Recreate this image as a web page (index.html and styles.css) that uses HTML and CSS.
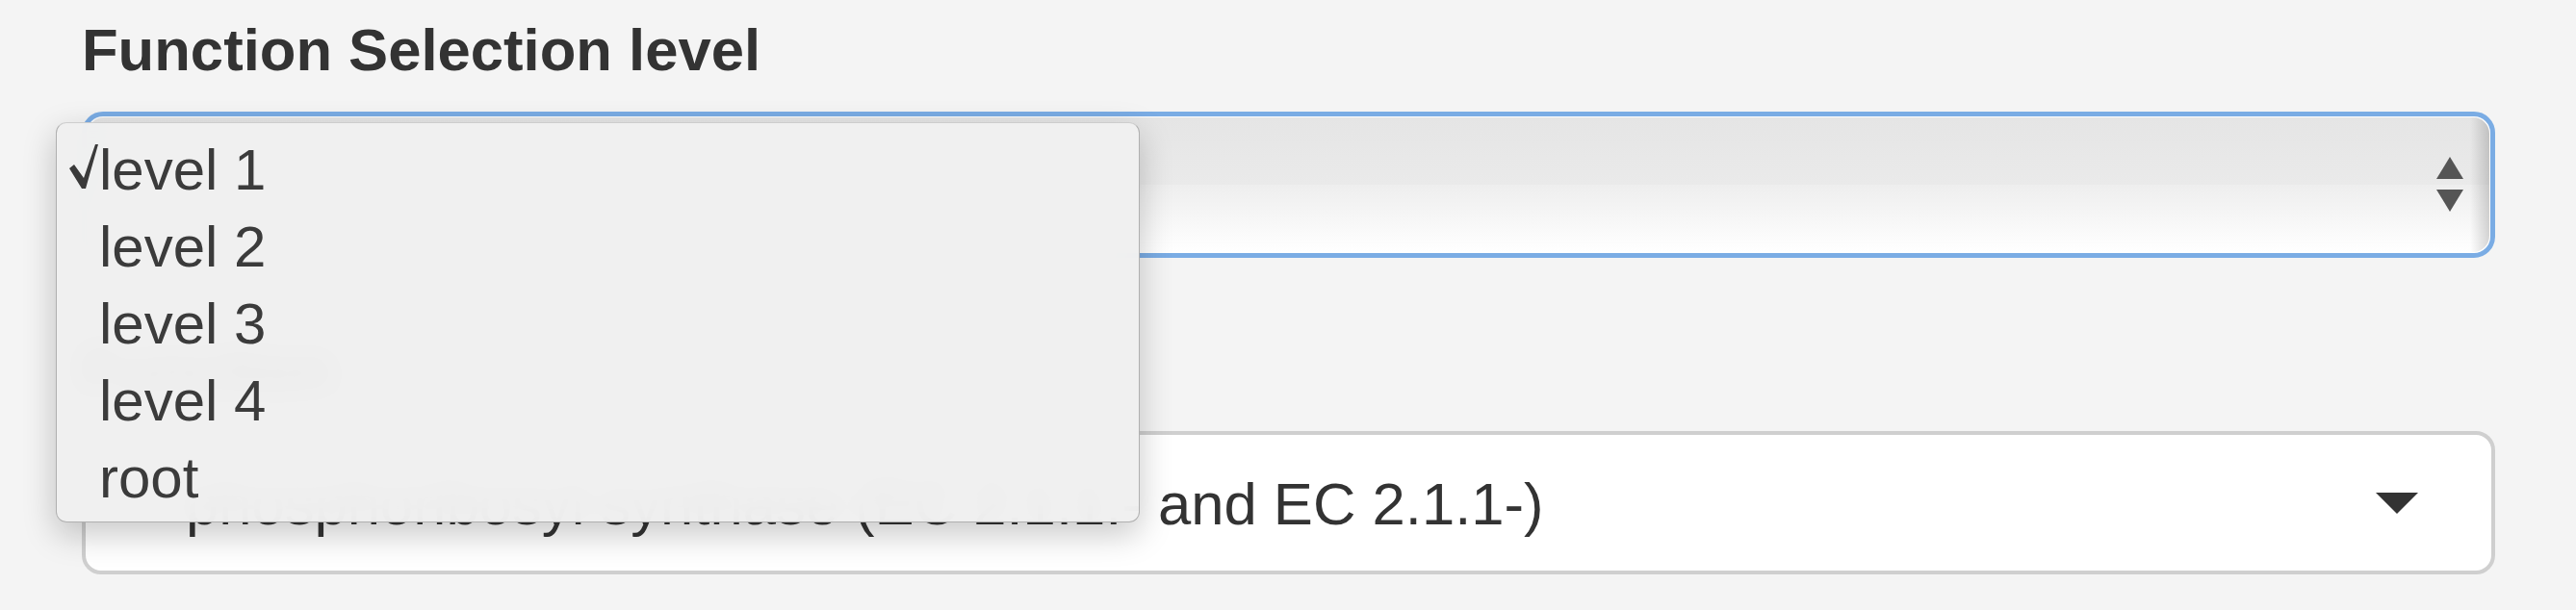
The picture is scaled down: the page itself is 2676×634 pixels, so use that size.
FILE: index.html
```html
<!DOCTYPE html>
<html>
<head>
<meta charset="utf-8">
<link rel="stylesheet" href="styles.css">
</head>
<body>
<div class="well">
  <div class="form-group">
    <label class="label">Function Selection level</label>
    <div class="select-focus">
      <div class="select-inner">
        <svg class="stepper" width="28" height="58" viewBox="0 0 28 58"><polygon points="14,0 28,23 0,23" fill="#555"/><polygon points="0,34 28,34 14,57" fill="#555"/></svg>
        <div class="select-edge"></div>
      </div>
    </div>
  </div>
  <div class="form-group last">
    <label class="label">Function</label>
    <div class="select">
      <span class="select-text">phosphoribosyl synthase (EC 2.1.1.- and EC 2.1.1-)</span>
      <svg class="caret" width="44" height="22" viewBox="0 0 44 22"><polygon points="0,0 44,0 22,22" fill="#333"/></svg>
    </div>
  </div>
</div>
<div class="menu">
  <div class="menu-item"><svg class="check" width="30" height="46" viewBox="0 0 30 46"><path d="M0,25 L5,21 L15,35 L27,0 L30,0 L17,46 L13,46 Z" fill="#3a3a3a"/></svg><span>level 1</span></div>
  <div class="menu-item"><span class="spacer"></span><span>level 2</span></div>
  <div class="menu-item"><span class="spacer"></span><span>level 3</span></div>
  <div class="menu-item"><span class="spacer"></span><span>level 4</span></div>
  <div class="menu-item"><span class="spacer"></span><span>root</span></div>
</div>
</body>
</html>
```
FILE: styles.css
```css
html, body {
  margin: 0;
  padding: 0;
}
html {
  overflow: hidden;
}
body {
  background: #f4f4f4;
  font-family: "Liberation Sans", Arial, sans-serif;
  color: #333;
  width: 2676px;
  height: 634px;
  overflow: hidden;
  position: relative;
}
.well {
  padding: 8px 84px 0 85px;
}
.form-group {
  margin-bottom: 72px;
}
.form-group.last {
  margin-bottom: 0;
}
.label {
  display: block;
  font-weight: 700;
  font-size: 61.6px;
  line-height: 88px;
  margin-bottom: 20px;
  color: #333;
}
.select-focus {
  height: 140px;
  border: 5px solid #7aace4;
  border-radius: 22px;
  padding: 1px;
  background: #fff;
}
.select-inner {
  height: 100%;
  border-radius: 17px;
  background: linear-gradient(#e5e5e5 0%, #eaeaea 50%, #eeeeee 50%, #ffffff 100%);
  display: flex;
  align-items: center;
  justify-content: flex-end;
  overflow: hidden;
}
.stepper {
  display: block;
  margin-right: 7px;
}
.select-edge {
  align-self: stretch;
  width: 20px;
  background: linear-gradient(to right, rgba(0,0,0,0), rgba(0,0,0,0.16));
}
.select {
  height: 141px;
  border: 4.5px solid #cfcfcf;
  border-radius: 20px;
  background: #fff;
  display: flex;
  align-items: center;
  padding: 0 76px 0 104px;
}
.select-text {
  flex: 1;
  font-size: 61.6px;
  color: #333;
  white-space: nowrap;
  position: relative;
  top: 1px;
}
.caret {
  display: block;
}
.menu {
  position: absolute;
  left: 58px;
  top: 127px;
  width: 1126px;
  height: 416px;
  padding: 9px 0 6px 0;
  box-sizing: border-box;
  background: rgba(240, 240, 240, 0.97);
  backdrop-filter: blur(14px);
  border: 1px solid #b0b0b0;
  border-top-color: #cdcdcd;
  border-radius: 11px;
  box-shadow: 0 12px 34px rgba(0, 0, 0, 0.22);
}
.menu-item {
  height: 80px;
  display: flex;
  align-items: center;
  font-size: 60px;
  color: #3b3b3b;
  line-height: 80px;
}
.check {
  display: block;
  margin-left: 13px;
  margin-right: 1px;
  position: relative;
  top: -4px;
}
.spacer {
  display: block;
  width: 44px;
}
```
